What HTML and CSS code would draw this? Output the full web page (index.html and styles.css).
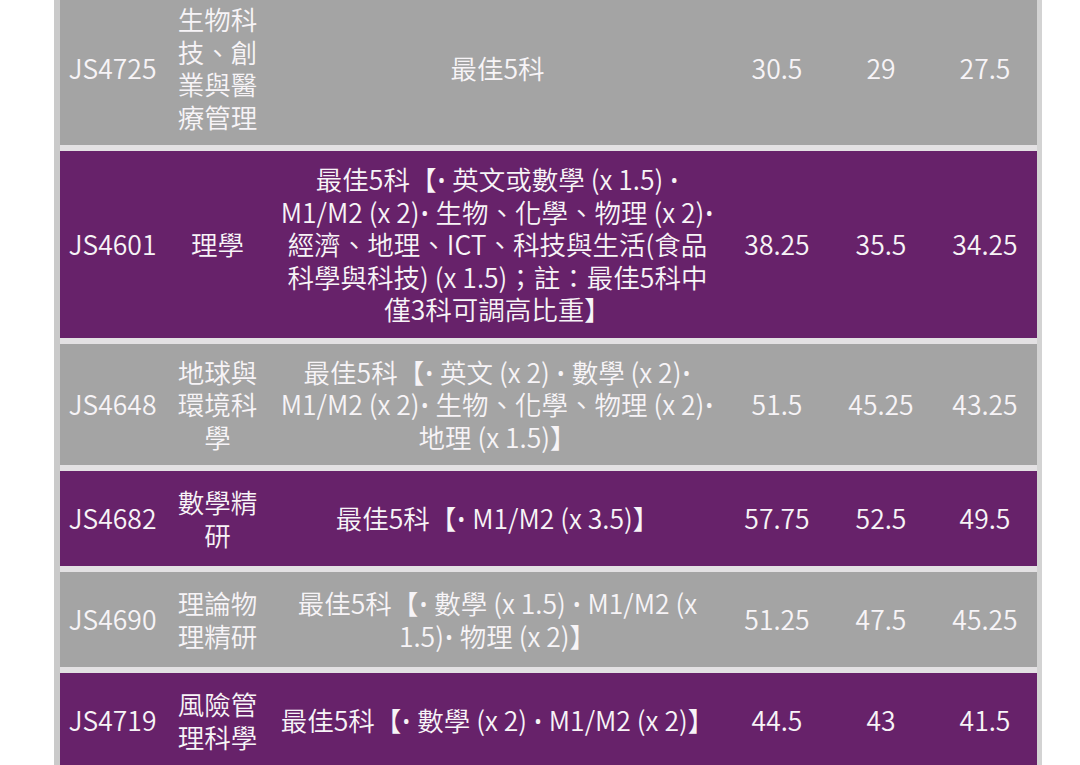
FILE: index.html
```html
<!DOCTYPE html>
<html lang="zh-Hant">
<head>
<meta charset="utf-8">
<title>JUPAS 收生分數</title>
<link rel="stylesheet" href="styles.css">
</head>
<body>
<div class="wrap">
<table class="scores">
  <colgroup>
    <col class="c-code"><col class="c-name"><col class="c-req"><col class="c-num"><col class="c-num"><col class="c-num">
  </colgroup>
  <tbody>
    <tr class="gray">
      <td>JS4725</td>
      <td class="name">生物科技、創業與醫療管理</td>
      <td class="req">最佳5科</td>
      <td>30.5</td><td>29</td><td>27.5</td>
    </tr>
    <tr class="purple">
      <td>JS4601</td>
      <td class="name">理學</td>
      <td class="req">最佳5科【<span class="b">•</span> 英文或數學 (x 1.5) <span class="b">•</span><br>M1/M2 (x 2)<span class="b">•</span> 生物、化學、物理 (x 2)<span class="b">•</span><br>經濟、地理、ICT、科技與生活(食品<br>科學與科技) (x 1.5)；註：最佳5科中<br>僅3科可調高比重】</td>
      <td>38.25</td><td>35.5</td><td>34.25</td>
    </tr>
    <tr class="gray">
      <td>JS4648</td>
      <td class="name">地球與環境科學</td>
      <td class="req">最佳5科【<span class="b">•</span> 英文 (x 2) <span class="b">•</span> 數學 (x 2)<span class="b">•</span><br>M1/M2 (x 2)<span class="b">•</span> 生物、化學、物理 (x 2)<span class="b">•</span><br>地理 (x 1.5)】</td>
      <td>51.5</td><td>45.25</td><td>43.25</td>
    </tr>
    <tr class="purple">
      <td>JS4682</td>
      <td class="name">數學精研</td>
      <td class="req">最佳5科【<span class="b">•</span> M1/M2 (x 3.5)】</td>
      <td>57.75</td><td>52.5</td><td>49.5</td>
    </tr>
    <tr class="gray">
      <td>JS4690</td>
      <td class="name">理論物理精研</td>
      <td class="req">最佳5科【<span class="b">•</span> 數學 (x 1.5) <span class="b">•</span> M1/M2 (x<br>1.5)<span class="b">•</span> 物理 (x 2)】</td>
      <td>51.25</td><td>47.5</td><td>45.25</td>
    </tr>
    <tr class="purple">
      <td>JS4719</td>
      <td class="name">風險管理科學</td>
      <td class="req">最佳5科【<span class="b">•</span> 數學 (x 2) <span class="b">•</span> M1/M2 (x 2)】</td>
      <td>44.5</td><td>43</td><td>41.5</td>
    </tr>
  </tbody>
</table>
</div>
</body>
</html>
```
FILE: styles.css
```css
html, body {
  margin: 0;
  padding: 0;
  background: #ffffff;
}

body {
  font-family: "Noto Sans CJK TC", "Noto Sans", sans-serif;
  overflow: hidden;
}

.wrap {
  margin-top: -15px;
  margin-left: 54px;
}

.scores {
  border-collapse: separate;
  border-spacing: 0 6px;
  table-layout: fixed;
  width: 988px;
  background: #e3e1e3;
  border-left: 6px solid #cacaca;
  border-right: 5px solid #d3d3d3;
}

.c-code { width: 105px; }
.c-name { width: 105px; }
.c-req { width: 455px; }
.c-num { width: 104px; }

.scores td {
  color: #f7f4f7;
  font-size: 26.5px;
  font-weight: 350;
  line-height: 32.5px;
  text-align: center;
  vertical-align: middle;
  padding: 12px 6px;
  height: 71px;
}

.scores td.name {
  word-break: break-all;
}

.scores td.req {
  white-space: nowrap;
  padding: 12px 4px;
}

.b {
  font-family: "Noto Sans", sans-serif;
  line-height: 0;
}

.gray td {
  background: #a4a4a4;
}

.purple td {
  background: #67226a;
}
```
